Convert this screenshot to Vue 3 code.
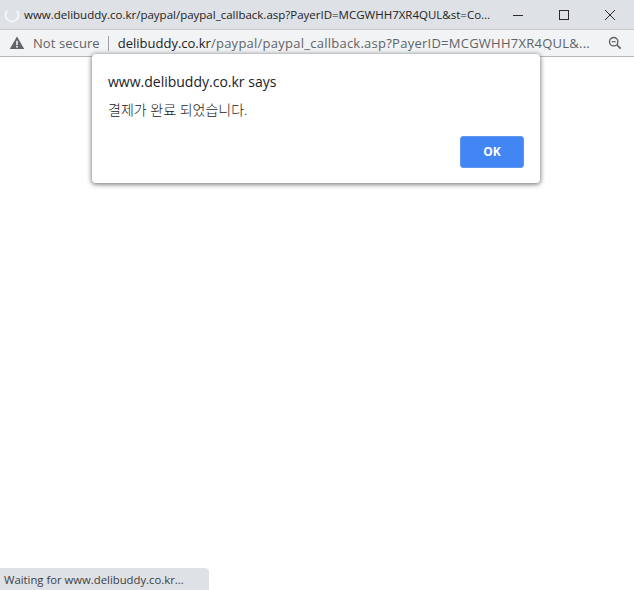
<script setup>
const title = 'www.delibuddy.co.kr/paypal/paypal_callback.asp?PayerID=MCGWHH7XR4QUL&st=Co...'
const path = '/paypal/paypal_callback.asp?PayerID=MCGWHH7XR4QUL&...'
</script>

<template>
  <div class="window">
    <header class="titlebar">
      <svg class="spinner" width="16" height="16" viewBox="0 0 16 16">
        <path d="M3.2 3.6A6.5 6.5 0 1 0 12.8 3.6" fill="none" stroke="#f4f6f8" stroke-width="2" />
      </svg>
      <span class="title">{{ title }}</span>
      <div class="controls">
        <svg width="12" height="12" viewBox="0 0 12 12"><path d="M1 6.5H11" stroke="#2b2b2b" fill="none" /></svg>
        <svg width="12" height="12" viewBox="0 0 12 12"><rect x="1.5" y="1.5" width="9" height="9" stroke="#2b2b2b" fill="none" /></svg>
        <svg width="12" height="12" viewBox="0 0 12 12"><path d="M1 1L11 11M11 1L1 11" stroke="#2b2b2b" fill="none" /></svg>
      </div>
    </header>
    <div class="addressbar">
      <svg class="warn" width="16" height="14" viewBox="0 0 16 14">
        <path d="M8 0.5L15.2 13H0.8Z" fill="#5f6368" />
        <rect x="7.2" y="4.8" width="1.6" height="4.4" fill="#f1f3f4" />
        <rect x="7.2" y="10" width="1.6" height="1.6" fill="#f1f3f4" />
      </svg>
      <span class="secure">Not secure</span>
      <span class="sep"></span>
      <span class="url"><span class="host">delibuddy.co.kr</span><span class="path">{{ path }}</span></span>
      <svg class="zoom" width="14" height="14" viewBox="0 0 16 16">
        <circle cx="6.5" cy="6.5" r="4.8" fill="none" stroke="#5f6368" stroke-width="1.6" />
        <path d="M4.3 6.5H8.7" stroke="#5f6368" stroke-width="1.4" />
        <path d="M10 10L14.5 14.5" stroke="#5f6368" stroke-width="2" />
      </svg>
    </div>
    <main class="page"></main>
    <section class="dialog">
      <h1 class="origin">www.delibuddy.co.kr says</h1>
      <p class="message">결제가 완료 되었습니다.</p>
      <div class="actions"><button class="ok">OK</button></div>
    </section>
    <div class="status">Waiting for www.delibuddy.co.kr...</div>
  </div>
</template>

<style scoped>
.window {
  position: relative;
  width: 634px;
  height: 590px;
  display: flex;
  flex-direction: column;
  overflow: hidden;
  background: #fff;
  font-family: "Open Sans", "Noto Sans CJK KR", sans-serif;
}
.titlebar {
  height: 29px;
  display: flex;
  align-items: center;
  padding-left: 4px;
  background: #dee1e6;
  box-sizing: border-box;
}
.spinner { flex: none; }
.title {
  margin-left: 4px;
  width: 470px;
  font-size: 11.5px;
  color: #222;
  white-space: nowrap;
}
.controls {
  margin-left: auto;
  display: flex;
  gap: 34px;
  padding-right: 18px;
}
.addressbar {
  height: 28px;
  display: flex;
  align-items: center;
  padding-left: 9px;
  background: #f1f3f4;
  border-bottom: 1px solid #b5b7ba;
  border-top: 1px solid #c9cbce;
  box-sizing: border-box;
}
.warn { flex: none; }
.secure {
  margin-left: 8px;
  font-size: 13px;
  letter-spacing: 0.08px;
  color: #5f6368;
}
.sep {
  width: 1px;
  height: 15px;
  margin: 0 9px 0 8px;
  background: #9aa0a6;
}
.url {
  font-size: 13px;
  color: #5f6368;
  white-space: nowrap;
  width: 480px;
}
.host { color: #202124; }
.path { letter-spacing: 0.25px; }
.zoom { flex: none; margin-left: 10px; }
.page { flex: 1; background: #fff; }
.dialog {
  position: absolute;
  left: 92px;
  top: 54px;
  width: 448px;
  height: 129px;
  box-sizing: border-box;
  padding: 18px 16px 15px;
  display: flex;
  flex-direction: column;
  background: #fff;
  border-radius: 4px;
  box-shadow: 0 1px 4px 1px rgba(60, 64, 67, 0.6);
}
.origin {
  margin: 0;
  font-size: 14px;
  line-height: 19px;
  font-weight: 400;
  color: #202124;
}
.message {
  margin: 10px 0 0;
  font-size: 14px;
  line-height: 18px;
  font-weight: 300;
  color: #202124;
}
.actions {
  margin-top: auto;
  display: flex;
  justify-content: flex-end;
}
.ok {
  width: 64px;
  height: 32px;
  padding: 0 0 2px;
  border: 1px solid #5f97f0;
  border-radius: 3px;
  background: #4285f4;
  color: #fff;
  font-family: inherit;
  font-size: 12px;
  font-weight: 700;
}
.status {
  position: absolute;
  left: 0;
  bottom: 0;
  width: 209px;
  height: 22px;
  padding-left: 4px;
  box-sizing: border-box;
  display: flex;
  align-items: center;
  background: #dee1e6;
  border-top-right-radius: 4px;
  font-size: 11.3px;
  color: #3c4043;
  white-space: nowrap;
}
</style>
